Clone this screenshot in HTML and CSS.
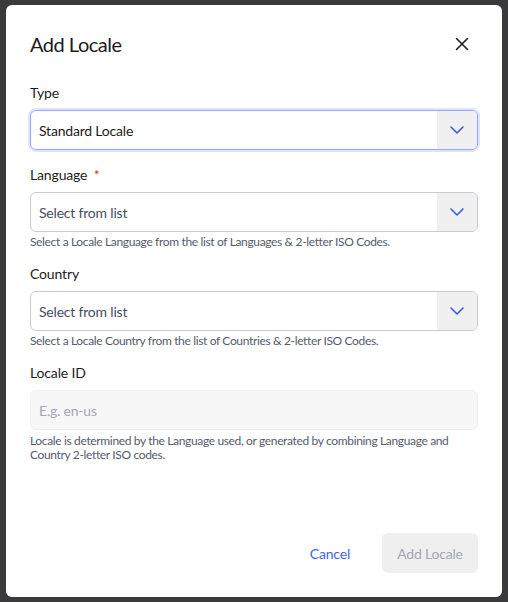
FILE: index.html
```html
<!DOCTYPE html>
<html>
<head>
<meta charset="utf-8">
<link rel="stylesheet" href="styles.css">
</head>
<body>
<div class="backdrop">
  <div class="modal">
    <div class="header">
      <h1 class="title">Add Locale</h1>
      <button class="close" aria-label="Close">
        <svg width="14" height="14" viewBox="0 0 14 14"><path d="M1.5 1.5 L12.5 12.5 M12.5 1.5 L1.5 12.5" stroke="#1f1f1f" stroke-width="1.6" fill="none" stroke-linecap="round"/></svg>
      </button>
    </div>
    <div class="body">
      <div class="field">
        <div class="label">Type</div>
        <div class="select focused">
          <span class="value">Standard Locale</span>
          <span class="arrow"><svg width="14" height="8" viewBox="0 0 14 8"><path d="M1 1 L7 7 L13 1" stroke="#3b5bf0" stroke-width="1.6" fill="none" stroke-linecap="round" stroke-linejoin="round"/></svg></span>
        </div>
      </div>
      <div class="field">
        <div class="label">Language <span class="req">*</span></div>
        <div class="select">
          <span class="value placeholder">Select from list</span>
          <span class="arrow"><svg width="14" height="8" viewBox="0 0 14 8"><path d="M1 1 L7 7 L13 1" stroke="#3b5bf0" stroke-width="1.6" fill="none" stroke-linecap="round" stroke-linejoin="round"/></svg></span>
        </div>
        <div class="help">Select a Locale Language from the list of Languages &amp; 2-letter ISO Codes.</div>
      </div>
      <div class="field">
        <div class="label">Country</div>
        <div class="select">
          <span class="value placeholder">Select from list</span>
          <span class="arrow"><svg width="14" height="8" viewBox="0 0 14 8"><path d="M1 1 L7 7 L13 1" stroke="#3b5bf0" stroke-width="1.6" fill="none" stroke-linecap="round" stroke-linejoin="round"/></svg></span>
        </div>
        <div class="help">Select a Locale Country from the list of Countries &amp; 2-letter ISO Codes.</div>
      </div>
      <div class="field">
        <div class="label">Locale ID</div>
        <div class="input disabled"><span class="ph">E.g. en-us</span></div>
        <div class="help two">Locale is determined by the Language used, or generated by combining Language and Country 2-letter ISO codes.</div>
      </div>
    </div>
    <div class="footer">
      <button class="btn link">Cancel</button>
      <button class="btn primary-disabled">Add Locale</button>
    </div>
  </div>
</div>
</body>
</html>
```
FILE: styles.css
```css
* { box-sizing: border-box; }
html, body { margin: 0; padding: 0; }
body {
  background: #3a3a3c;
  font-family: Lato, "Open Sans", sans-serif;
  color: #1c1c1c;
}
.backdrop {
  width: 508px;
  height: 602px;
  padding: 5px 6px;
}
.modal {
  background: #fff;
  border-radius: 6px;
  height: 592px;
  display: flex;
  flex-direction: column;
  padding: 23px 24px 24px 24px;
}
.header {
  display: flex;
  align-items: center;
  justify-content: space-between;
  height: 32px;
}
.title {
  margin: 0;
  font-size: 20px;
  font-weight: 400;
  line-height: 32px;
  letter-spacing: -0.5px;
  color: #1c1c1c;
}
.close {
  border: 0;
  background: transparent;
  padding: 0;
  width: 14px;
  height: 14px;
  margin-right: 9px;
  display: flex;
}
.body {
  flex: 1;
  padding-top: 23px;
  display: flex;
  flex-direction: column;
  gap: 14px;
}
.field { display: flex; flex-direction: column; }
.field:first-child { margin-bottom: 1px; }
.label {
  font-size: 14px;
  line-height: 20px;
  letter-spacing: -0.15px;
  color: #1c1c1c;
  margin-bottom: 7px;
}
.req { color: #e0322c; margin-left: 3px; }
.select {
  display: flex;
  height: 40px;
  border: 1px solid #c9cbd1;
  border-radius: 6px;
  overflow: hidden;
}
.select.focused {
  border-color: #98a6f7;
  box-shadow: 0 0 0 2px #dfe4fd;
}
.value {
  flex: 1;
  display: flex;
  align-items: center;
  padding-left: 8px;
  font-size: 14px;
  letter-spacing: -0.2px;
  color: #1c1c1c;
}
.value.placeholder { color: #474d62; }
.arrow {
  width: 40px;
  background: #f0f0f0;
  display: flex;
  align-items: center;
  justify-content: center;
}
.input {
  height: 40px;
  border: 1px solid #efeff1;
  border-radius: 6px;
  background: #f7f7f8;
  display: flex;
  align-items: center;
  padding-left: 8px;
}
.ph { font-size: 14px; color: #a5a8b4; letter-spacing: -0.2px; }
.help {
  font-size: 12px;
  line-height: 16px;
  letter-spacing: -0.35px;
  color: #565b6b;
  margin-top: 2px;
}
.help.two { line-height: 14px; margin-top: 4px; }
.footer {
  display: flex;
  justify-content: flex-end;
  align-items: center;
  gap: 16px;
}
.btn {
  height: 40px;
  border: 0;
  border-radius: 6px;
  font-family: inherit;
  font-size: 14px;
  letter-spacing: -0.2px;
  padding: 0 16px;
  background: transparent;
}
.btn.link { color: #3f63f0; }
.btn.primary-disabled {
  background: #efeff0;
  color: #a4a7b3;
  width: 96px;
  padding: 0;
}
```
